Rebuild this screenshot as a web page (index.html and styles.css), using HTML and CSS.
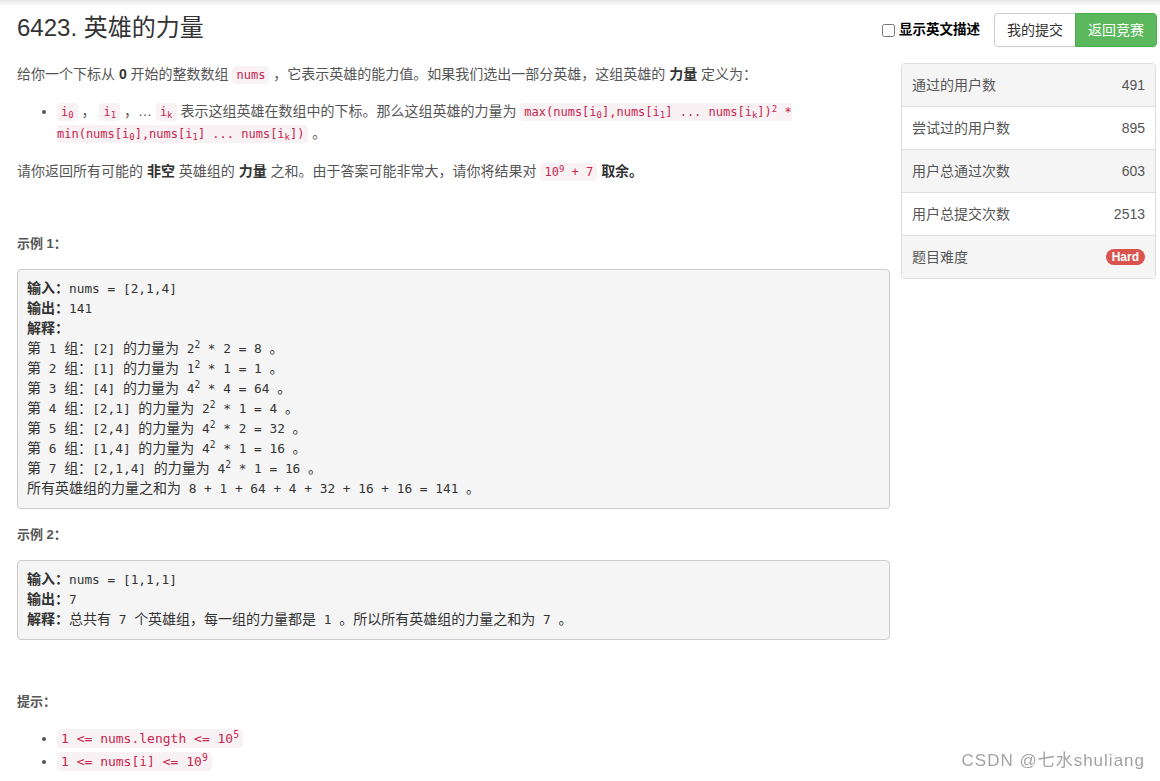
FILE: index.html
```html
<!DOCTYPE html>
<html lang="zh-CN">
<head>
<meta charset="utf-8">
<title>6423. 英雄的力量</title>
<link rel="stylesheet" href="styles.css">
</head>
<body>
<div class="topshadow"></div>
<div class="page">
  <div class="header">
    <h3 class="title">6423. 英雄的力量</h3>
    <div class="tools">
      <label class="toggle"><input type="checkbox" class="chk"><span>显示英文描述</span></label>
      <div class="btn-group">
        <a class="btn btn-default">我的提交</a>
        <a class="btn btn-success">返回竞赛</a>
      </div>
    </div>
  </div>
  <div class="content">
    <div class="main">
      <p class="p1">给你一个下标从 <strong>0</strong> 开始的整数数组&nbsp;<code>nums</code>&nbsp;，它表示英雄的能力值。如果我们选出一部分英雄，这组英雄的 <strong>力量</strong> 定义为：</p>
      <ul class="ul1">
        <li><code>i<sub>0</sub></code>&nbsp;，&nbsp;<code>i<sub>1</sub></code>&nbsp;，… <code>i<sub>k</sub></code>&nbsp;表示这组英雄在数组中的下标。那么这组英雄的力量为&nbsp;<code>max(nums[i<sub>0</sub>],nums[i<sub>1</sub>] ... nums[i<sub>k</sub>])<sup>2</sup> * min(nums[i<sub>0</sub>],nums[i<sub>1</sub>] ... nums[i<sub>k</sub>])</code>&nbsp;。</li>
      </ul>
      <p class="p3">请你返回所有可能的 <strong>非空</strong> 英雄组的 <strong>力量</strong> 之和。由于答案可能非常大，请你将结果对&nbsp;<code>10<sup>9</sup> + 7</code>&nbsp;<strong>取余。</strong></p>
      <p class="label">示例 1：</p>
      <pre class="example ex1"><strong>输入：</strong>nums = [2,1,4]
<strong>输出：</strong>141
<strong>解释：</strong>
<span class="zh">第</span> 1 <span class="zh">组：</span>[2] <span class="zh">的力量为</span> 2<sup>2</sup> * 2 = 8 <span class="zh">。</span>
<span class="zh">第</span> 2 <span class="zh">组：</span>[1] <span class="zh">的力量为</span> 1<sup>2</sup> * 1 = 1 <span class="zh">。</span>
<span class="zh">第</span> 3 <span class="zh">组：</span>[4] <span class="zh">的力量为</span> 4<sup>2</sup> * 4 = 64 <span class="zh">。</span>
<span class="zh">第</span> 4 <span class="zh">组：</span>[2,1] <span class="zh">的力量为</span> 2<sup>2</sup> * 1 = 4 <span class="zh">。</span>
<span class="zh">第</span> 5 <span class="zh">组：</span>[2,4] <span class="zh">的力量为</span> 4<sup>2</sup> * 2 = 32 <span class="zh">。</span>
<span class="zh">第</span> 6 <span class="zh">组：</span>[1,4] <span class="zh">的力量为</span> 4<sup>2</sup> * 1 = 16 <span class="zh">。</span>
<span class="zh">第</span> 7 <span class="zh">组：</span>[2,1,4] <span class="zh">的力量为</span> 4<sup>2</sup> * 1 = 16 <span class="zh">。</span>
<span class="zh">所有英雄组的力量之和为</span> 8 + 1 + 64 + 4 + 32 + 16 + 16 = 141 <span class="zh">。</span></pre>
      <p class="label">示例 2：</p>
      <pre class="example ex2"><strong>输入：</strong>nums = [1,1,1]
<strong>输出：</strong>7
<strong>解释：</strong><span class="zh">总共有</span> 7 <span class="zh">个英雄组，每一组的力量都是</span> 1 <span class="zh">。所以所有英雄组的力量之和为</span> 7 <span class="zh">。</span></pre>
      <p class="label">提示：</p>
      <ul class="tips">
        <li><code>1 &lt;= nums.length &lt;= 10<sup>5</sup></code></li>
        <li><code>1 &lt;= nums[i] &lt;= 10<sup>9</sup></code></li>
      </ul>
    </div>
    <div class="sidebar">
      <div class="row odd"><span>通过的用户数</span><span class="num">491</span></div>
      <div class="row"><span>尝试过的用户数</span><span class="num">895</span></div>
      <div class="row odd"><span>用户总通过次数</span><span class="num">603</span></div>
      <div class="row"><span>用户总提交次数</span><span class="num">2513</span></div>
      <div class="row odd"><span>题目难度</span><span class="badge">Hard</span></div>
    </div>
  </div>
</div>
<div class="watermark">CSDN @七水shuliang</div>
</body>
</html>
```
FILE: styles.css
```css
html, body {
  margin: 0;
  padding: 0;
  background: #fff;
}
body {
  font-family: "Liberation Sans", "Noto Sans CJK SC", sans-serif;
  font-size: 14px;
  line-height: 20px;
  color: #555;
}
.topshadow {
  height: 6px;
  background: linear-gradient(to bottom, #e6e6e6, #ffffff);
}
.page {
  padding: 0 3px 0 17px;
}
.header {
  display: flex;
  justify-content: space-between;
  align-items: flex-start;
  margin-top: 7px;
  margin-bottom: 16px;
}
.title {
  margin: 0;
  font-size: 24px;
  line-height: 30px;
  font-weight: normal;
  color: #333;
}
.tools {
  display: flex;
  align-items: center;
}
.toggle {
  display: flex;
  align-items: center;
  font-weight: bold;
  font-size: 13.5px;
  color: #000;
  margin-right: 14px;
}
.chk {
  width: 13px;
  height: 13px;
  margin: 0 4px 0 0;
}
.btn-group {
  display: flex;
}
.btn {
  display: block;
  padding: 6px 12px;
  font-size: 14px;
  line-height: 20px;
  border: 1px solid #ccc;
  cursor: pointer;
}
.btn-default {
  background: #fff;
  color: #333;
  border-radius: 4px 0 0 4px;
}
.btn-success {
  background: #5cb85c;
  border-color: #4cae4c;
  color: #fff;
  border-radius: 0 4px 4px 0;
  margin-left: -1px;
}
.content {
  display: flex;
  align-items: flex-start;
}
.main {
  width: 873px;
  flex: none;
}
.main p {
  margin: 0;
}
.p1 {
  margin-top: 1px !important;
  margin-bottom: 16px !important;
}
.ul1 {
  margin: 0 0 17px;
  padding-left: 40px;
  line-height: 22px;
}
.p3 {
  margin-bottom: 53px !important;
}
strong {
  font-weight: bold;
  line-height: 1;
}
.main > p > strong, .ul1 strong {
  color: #333;
}
code {
  font-family: "DejaVu Sans Mono", "Liberation Mono", monospace;
  font-size: 12px;
  line-height: 1;
  padding: 2px 4px;
  color: #c7254e;
  background: #f9f2f4;
  border-radius: 4px;
}
sub, sup {
  font-size: 75%;
  line-height: 0;
}
sub {
  vertical-align: -0.25em;
}
sup {
  vertical-align: 0.5em;
}
.label {
  font-size: 13px;
  font-weight: bold;
  color: #555;
  margin-bottom: 15px !important;
}
.example {
  margin: 0 0 16px;
  padding: 9px;
  border: 1px solid #ccc;
  border-radius: 4px;
  background: #f5f5f5;
  font-family: "DejaVu Sans Mono", "Noto Sans CJK SC", monospace;
  font-size: 12.8px;
  line-height: 20px;
  color: #333;
  white-space: pre;
  overflow: hidden;
}
.example .zh {
  font-family: "Noto Sans CJK SC", sans-serif;
  font-size: 14px;
  line-height: 1;
}
.example strong {
  font-family: "Noto Sans CJK SC", sans-serif;
  font-size: 14px;
}
.ex2 {
  margin-bottom: 52px;
}
.tips {
  margin: 0;
  padding-left: 40px;
  line-height: 23px;
}
.tips code {
  font-size: 13px;
}
.sidebar {
  width: 255px;
  flex: none;
  margin-left: 11px;
  border: 1px solid #ddd;
  border-radius: 4px;
  overflow: hidden;
  box-sizing: border-box;
}
.row {
  display: flex;
  justify-content: space-between;
  align-items: center;
  height: 43px;
  padding: 0 10px;
  box-sizing: border-box;
  border-top: 1px solid #ddd;
  font-size: 14px;
  color: #555;
  background: #fff;
}
.row:first-child {
  border-top: none;
  height: 42px;
}
.row.odd {
  background: #f5f5f5;
}
.num {
  color: #555;
}
.badge {
  display: inline-block;
  background: #d9534f;
  color: #fff;
  font-weight: bold;
  font-size: 12px;
  line-height: 16px;
  padding: 0 6px;
  border-radius: 9px;
  margin-right: 0;
}
.watermark {
  position: fixed;
  right: 15px;
  bottom: 10px;
  font-family: "Liberation Sans", "Noto Sans CJK SC", sans-serif;
  font-size: 17px;
  line-height: 20px;
  letter-spacing: 1px;
  color: #a3a3a3;
}
```
